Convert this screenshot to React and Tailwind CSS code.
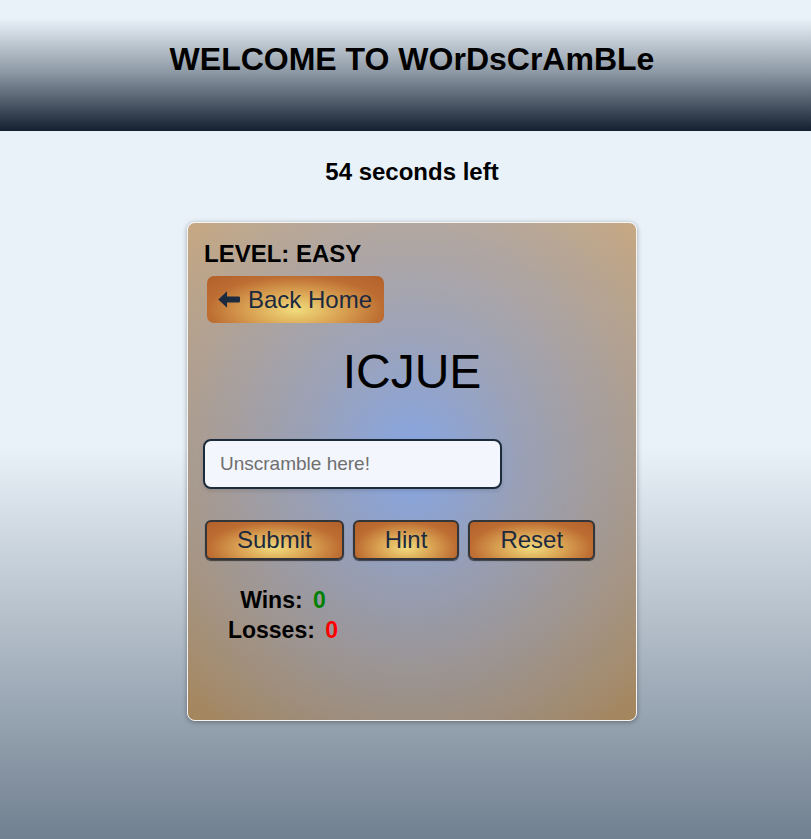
import React from "react";

function ArrowLeft() {
  return (
    <svg width="22" height="17" viewBox="0 0 22 17" className="shrink-0">
      <path
        d="M0.3 8.5 L9 0.3 V5.5 H20.8 Q22 5.5 22 6.7 V10.3 Q22 11.5 20.8 11.5 H9 V16.7 Z"
        fill="#1b2a3f"
      />
    </svg>
  );
}

const goldBtn =
  "bg-[radial-gradient(ellipse_at_50%_72%,#f1dc7c_0%,#d9a152_38%,#bd6d32_70%,#b2602a_100%)]";

export default function App() {
  return (
    <div
      className="min-h-screen w-full bg-[linear-gradient(to_bottom,#eaf2f9_0%,#eaf2f9_53%,#718090_100%)] text-black"
      style={{ fontFamily: '"Liberation Sans", Arial, sans-serif' }}
    >
      <header className="h-[131px] pt-[41px] pl-[13px] bg-[linear-gradient(to_bottom,#eaf2f9_14%,#8d99a5_55%,#142030_100%)]">
        <h1 className="text-center text-[32px] font-bold leading-[37px]">
          WELCOME TO WOrDsCrAmBLe
        </h1>
      </header>

      <div className="pl-[13px]">
        <div className="pt-[27px] text-center text-[24px] font-bold leading-[28px]">
          54 seconds left
        </div>

        <div className="flex justify-center pt-[36px]">
          <div className="w-[450px] h-[499px] rounded-[8px] border border-[#f4f4f4] shadow-[0_1px_5px_rgba(0,0,0,0.35)] px-[15px] pt-[17px] bg-[radial-gradient(ellipse_at_50%_48%,rgba(134,166,229,1)_0%,rgba(134,166,229,0.6)_35%,rgba(134,166,229,0.3)_68%,rgba(134,166,229,0)_100%),linear-gradient(to_bottom,#c9a87e,#a5855a)]">
            <div className="pl-[1px] text-[24px] font-bold leading-[28px]">LEVEL: EASY</div>

            <div className="mt-[8px] ml-[4px] flex">
              <button
                className={`${goldBtn} flex items-center gap-[8px] h-[47px] pl-[11px] pr-[12px] rounded-[7px] text-[24px] leading-[28px] text-[#1b2a3f]`}
              >
                <ArrowLeft />
                <span>Back Home</span>
              </button>
            </div>

            <div className="mt-[21px] text-center text-[48px] leading-[55px]">ICJUE</div>

            <div className="mt-[40px]">
              <input
                type="text"
                placeholder="Unscramble here!"
                className="block w-[299px] h-[50px] rounded-[8px] border-2 border-[#1c2b3c] bg-[#f3f6fc] pl-[15px] text-[19px] text-black placeholder:text-[#6f6f6f] outline-none shadow-[0_2px_4px_rgba(0,0,0,0.12)]"
                style={{ fontFamily: '"Liberation Sans", Arial, sans-serif' }}
              />
            </div>

            <div className="mt-[31px] ml-[2px] flex gap-[9px]">
              {["Submit", "Hint", "Reset"].map((t) => (
                <button
                  key={t}
                  className={`${goldBtn} h-[40px] px-[30px] rounded-[6px] border-2 border-[#333538] shadow-[0_1px_1px_rgba(0,0,0,0.6)] text-[24px] leading-[28px] text-[#1b2a3f]`}
                >
                  {t}
                </button>
              ))}
            </div>

            <div className="mt-[25px] w-[160px] text-center text-[23px] font-bold leading-[30px]">
              <div>
                Wins:&nbsp;<span className="ml-[4px] text-[#008000]">0</span>
              </div>
              <div>
                Losses:&nbsp;<span className="ml-[4px] text-[#ff0000]">0</span>
              </div>
            </div>
          </div>
        </div>
      </div>
    </div>
  );
}
